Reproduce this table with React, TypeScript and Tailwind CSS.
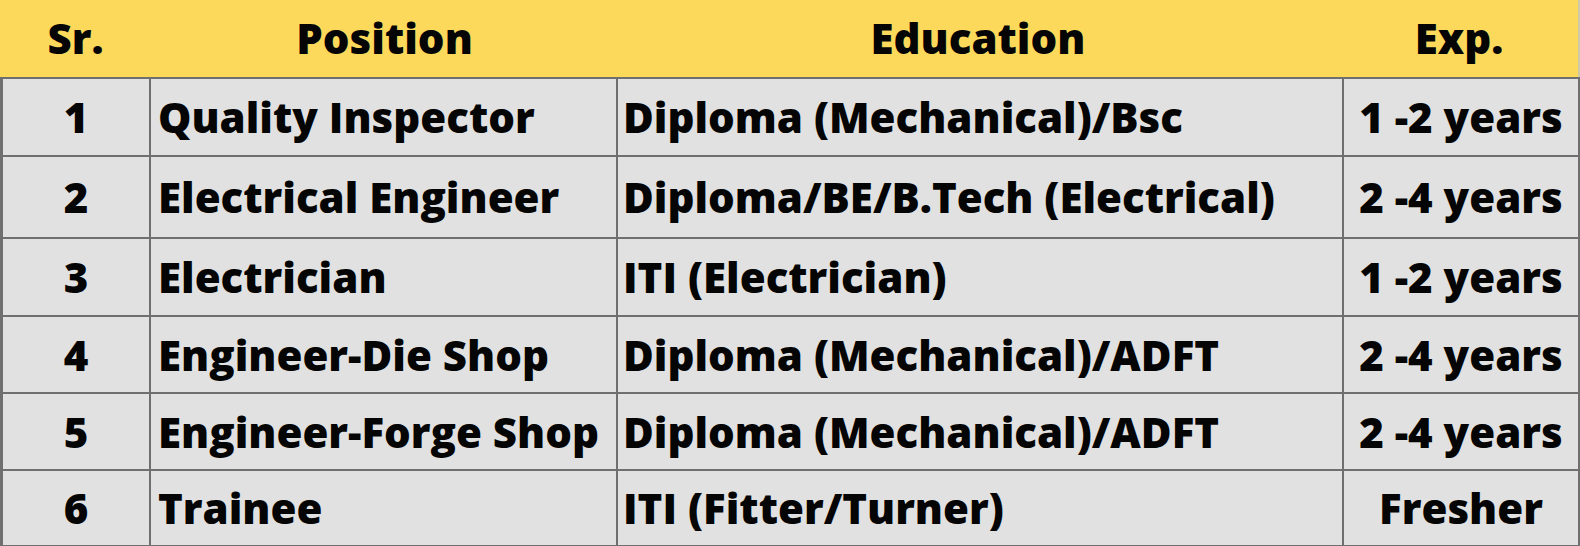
import React from 'react';

type Row = { sr: string; position: string; education: string; exp: string };

const rows: Row[] = [
  { sr: '1', position: 'Quality Inspector', education: 'Diploma (Mechanical)/Bsc', exp: '1 -2 years' },
  { sr: '2', position: 'Electrical Engineer', education: 'Diploma/BE/B.Tech (Electrical)', exp: '2 -4 years' },
  { sr: '3', position: 'Electrician', education: 'ITI (Electrician)', exp: '1 -2 years' },
  { sr: '4', position: 'Engineer-Die Shop', education: 'Diploma (Mechanical)/ADFT', exp: '2 -4 years' },
  { sr: '5', position: 'Engineer-Forge Shop', education: 'Diploma (Mechanical)/ADFT', exp: '2 -4 years' },
  { sr: '6', position: 'Trainee', education: 'ITI (Fitter/Turner)', exp: 'Fresher' },
];

const heights = ['h-[78px]', 'h-[82px]', 'h-[78px]', 'h-[77px]', 'h-[77px]', 'h-[76px]'];

export default function App() {
  return (
    <div
      className="w-[1580px] h-[546px] overflow-hidden bg-[#e1e1e1] text-[#050505] font-extrabold text-[42px] leading-none"
      style={{ fontFamily: '"Open Sans", "Noto Sans", sans-serif' }}
    >
      {/* Header */}
      <div className="grid grid-cols-[151px_467px_726px_236px] h-[77px] bg-[#fdd95b] border-r-2 border-[#cfc9a8]">
        <div className="flex items-center justify-center pb-[2px]">Sr.</div>
        <div className="flex items-center justify-center pb-[2px]">Position</div>
        <div className="flex items-center justify-center pb-[2px] pr-[6px]">Education</div>
        <div className="flex items-center justify-center pb-[2px] pr-[6px]">Exp.</div>
      </div>

      {/* Body */}
      <div className="border-l-[3px] border-r-2 border-[#6f6f6f]">
        {rows.map((r, i) => (
          <div
            key={r.sr}
            className={`grid grid-cols-[148px_467px_726px_234px] border-t-2 border-[#6f6f6f] ${heights[i]}`}
          >
            <div className="flex items-center justify-center border-r-2 border-[#6f6f6f]">{r.sr}</div>
            <div className="flex items-center pl-[7px] border-r-2 border-[#6f6f6f] whitespace-nowrap">
              {r.position}
            </div>
            <div className="flex items-center pl-[5px] border-r-2 border-[#6f6f6f] whitespace-nowrap">
              {r.education}
            </div>
            <div className="flex items-center justify-center whitespace-nowrap">{r.exp}</div>
          </div>
        ))}
        <div className="border-t-2 border-[#6f6f6f]" />
      </div>
    </div>
  );
}
